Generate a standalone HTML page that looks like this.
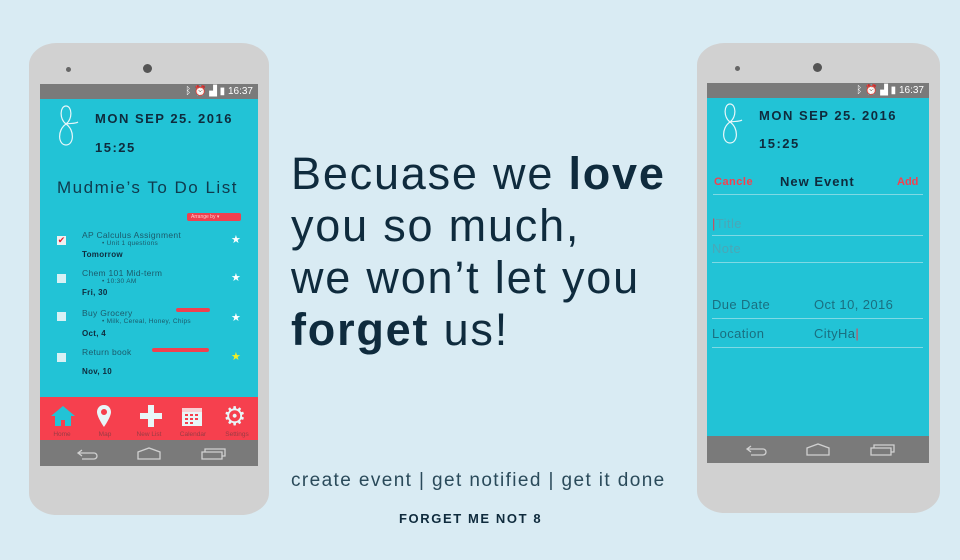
<!DOCTYPE html>
<html><head><meta charset="utf-8"><style>
*{margin:0;padding:0;box-sizing:border-box}
body{width:960px;height:560px;background:#d9ebf3;position:relative;overflow:hidden;font-family:"Liberation Sans",sans-serif;color:#0f2b3d}
.abs{position:absolute}
.phone{position:absolute;background:#d1d1d1;border-radius:28px/22px}
.status{position:absolute;background:#7a7a7a;color:#fff;font-size:10px;text-align:right;padding-right:5px;line-height:15px}
.teal{position:absolute;background:#22c3d6}
.nav{position:absolute;background:#7a7a7a}
.date{font-weight:bold;letter-spacing:1.5px;font-size:13px;color:#0f2b3d}
.cb{position:absolute;width:9px;height:9px;background:#d8f1f5;left:17px}
.it{position:absolute;left:42px;font-size:8.5px;color:#1b5a6b;letter-spacing:.3px}
.sub{position:absolute;left:62px;font-size:6.5px;color:#1b5a6b;letter-spacing:.3px}
.due{position:absolute;left:42px;font-size:8px;font-weight:bold;color:#0f2b3d;letter-spacing:.3px}
.star{position:absolute;left:191px;color:#fff;font-size:11px}
.tag{position:absolute;background:#f0404f;height:5px;border-radius:2px}
.nv{position:absolute;color:#9a3b44;font-size:6.5px;width:44px;text-align:center;top:34px}
.field{position:absolute;left:5px;right:6px;border-bottom:1px solid #7fd9e4;font-size:13px;color:#1a6f80;letter-spacing:.4px}
</style></head><body>

<!-- left phone -->
<div class="phone" style="left:29px;top:43px;width:240px;height:472px"></div>
<div class="abs" style="left:66px;top:67px;width:5px;height:5px;border-radius:50%;background:#666"></div>
<div class="abs" style="left:143px;top:64px;width:9px;height:9px;border-radius:50%;background:#555"></div>
<div class="status" style="left:40px;top:84px;width:218px;height:15px">ᛒ ⏰ ▟ ▮ 16:37</div>
<div class="teal" style="left:40px;top:99px;width:218px;height:298px">
  <svg class="abs" style="left:14px;top:4px" width="26" height="46" viewBox="0 0 26 46"><path d="M12 21 C5 16 6 3 12 3 C18 3 19 16 12 21 C3 27 4 42 12 42 C20 42 21 27 12 21 M12 21 C17 20 21 21 24 19" fill="none" stroke="#e8f7fa" stroke-width="1.2"/></svg>
  <div class="abs date" style="left:55px;top:12px">MON SEP 25. 2016</div>
  <div class="abs date" style="left:55px;top:41px">15:25</div>
  <div class="abs" style="left:17px;top:79px;font-size:17px;color:#0f3a4d;letter-spacing:1.5px">Mudmie’s To Do List</div>
  <div class="abs" style="left:147px;top:114px;width:54px;height:8px;background:#f0404f;border-radius:2px;font-size:5px;color:#fcc;padding-left:4px;line-height:8px">Arrange by ▾</div>
  <div class="cb" style="top:137px;background:#f0f0f0;color:#e02030;font-size:9px;line-height:9px;text-align:center">✔</div>
  <div class="it" style="top:131px">AP Calculus Assignment</div>
  <div class="sub" style="top:141px">• Unit 1 questions</div>
  <div class="due" style="top:151px">Tomorrow</div>
  <div class="star" style="top:134px">★</div>
  <div class="cb" style="top:175px"></div>
  <div class="it" style="top:169px">Chem 101 Mid-term</div>
  <div class="sub" style="top:179px">• 10:30 AM</div>
  <div class="due" style="top:189px">Fri, 30</div>
  <div class="star" style="top:172px">★</div>
  <div class="cb" style="top:213px"></div>
  <div class="it" style="top:209px">Buy Grocery</div>
  <div class="tag" style="left:136px;top:209px;width:34px;height:4px"></div>
  <div class="sub" style="top:219px">• Milk, Cereal, Honey, Chips</div>
  <div class="due" style="top:230px">Oct, 4</div>
  <div class="star" style="top:212px">★</div>
  <div class="cb" style="top:254px"></div>
  <div class="it" style="top:248px">Return book</div>
  <div class="tag" style="left:112px;top:249px;width:57px;height:4px"></div>
  <div class="due" style="top:268px">Nov, 10</div>
  <div class="star" style="top:251px;color:#f4f020">★</div>
</div>
<div class="abs" style="left:40px;top:397px;width:218px;height:43px;background:#f6404e">
  <svg class="abs" style="left:10px;top:8px" width="26" height="22" viewBox="0 0 26 22"><path d="M13 1 L1 11 H5 V21 H11 V15 H15 V21 H21 V11 H25 Z" fill="#22c3d6"/></svg>
  <svg class="abs" style="left:56px;top:7px" width="16" height="24" viewBox="0 0 16 24"><path d="M8 1 C3 1 1 5 1 8 C1 13 8 23 8 23 C8 23 15 13 15 8 C15 5 13 1 8 1Z M8 5 a3 3 0 1 0 .01 0Z" fill="#e8f6f8" fill-rule="evenodd"/></svg>
  <div class="abs" style="left:100px;top:16px;width:22px;height:6px;background:#e8f6f8"></div>
  <div class="abs" style="left:108px;top:8px;width:6px;height:22px;background:#e8f6f8"></div>
  <svg class="abs" style="left:141px;top:8px" width="22" height="22" viewBox="0 0 22 22"><rect x="1" y="3" width="20" height="18" fill="#e8f6f8"/><rect x="1" y="3" width="20" height="4" fill="#f8d0d4"/><g fill="#f6404e"><rect x="4" y="9" width="3" height="2"/><rect x="9" y="9" width="3" height="2"/><rect x="14" y="9" width="3" height="2"/><rect x="4" y="13" width="3" height="2"/><rect x="9" y="13" width="3" height="2"/><rect x="14" y="13" width="3" height="2"/><rect x="4" y="17" width="3" height="2"/><rect x="9" y="17" width="3" height="2"/></g></svg>
  <div class="abs" style="left:183px;top:6px;color:#e8f6f8;font-size:26px;line-height:26px">⚙</div>
  <div class="nv" style="left:0px">Home</div>
  <div class="nv" style="left:43px">Map</div>
  <div class="nv" style="left:87px">New List</div>
  <div class="nv" style="left:131px">Calendar</div>
  <div class="nv" style="left:175px">Settings</div>
</div>
<div class="nav" style="left:40px;top:440px;width:218px;height:26px">
  <svg class="abs" style="left:36px;top:7px" width="150" height="14" viewBox="0 0 150 14"><g fill="none" stroke="#d0d0d0" stroke-width="1.3"><path d="M6 3 L2 6 L6 9 M2 6 H18 A3 3 0 0 1 18 12 H6"/><path d="M62 5 L73 1 L84 5 V12 H62Z"/><path d="M126 5 H146 V12 H126Z M129 5 V2 H149 V9 H146"/></g></svg>
</div>

<!-- center text -->
<div class="abs" style="left:291px;top:148px;font-size:45px;line-height:52px;color:#0f2b3d;font-weight:400;letter-spacing:1.8px">Becuase we <b style="font-weight:700">love</b><br>you so much,<br>we won’t let you<br><b style="font-weight:700">forget</b> us!</div>
<div class="abs" style="left:291px;top:470px;font-size:19px;color:#2a4a5a;letter-spacing:1.4px">create event | get notified | get it done</div>
<div class="abs" style="left:399px;top:511px;font-size:13px;font-weight:bold;color:#0f2b3d;letter-spacing:1.6px">FORGET ME NOT 8</div>

<!-- right phone -->
<div class="phone" style="left:697px;top:43px;width:243px;height:470px"></div>
<div class="abs" style="left:735px;top:66px;width:5px;height:5px;border-radius:50%;background:#666"></div>
<div class="abs" style="left:813px;top:63px;width:9px;height:9px;border-radius:50%;background:#555"></div>
<div class="status" style="left:707px;top:83px;width:222px;height:15px">ᛒ ⏰ ▟ ▮ 16:37</div>
<div class="teal" style="left:707px;top:98px;width:222px;height:338px">
  <svg class="abs" style="left:11px;top:3px" width="26" height="46" viewBox="0 0 26 46"><path d="M12 21 C5 16 6 3 12 3 C18 3 19 16 12 21 C3 27 4 42 12 42 C20 42 21 27 12 21 M12 21 C17 20 21 21 24 19" fill="none" stroke="#e8f7fa" stroke-width="1.2"/></svg>
  <div class="abs date" style="left:52px;top:10px">MON SEP 25. 2016</div>
  <div class="abs date" style="left:52px;top:38px">15:25</div>
  <div class="abs" style="left:7px;top:78px;font-size:11px;font-weight:bold;color:#f6404e;letter-spacing:.5px">Cancle</div>
  <div class="abs" style="left:73px;top:76px;font-size:13px;font-weight:bold;color:#0f2b3d;letter-spacing:1px">New Event</div>
  <div class="abs" style="left:190px;top:78px;font-size:11px;font-weight:bold;color:#f6404e">Add</div>
  <div class="abs" style="left:6px;right:6px;top:96px;border-top:1px solid #7fd9e4"></div>
  <div class="field" style="top:118px;height:20px;color:#4aa7b7"><span style="color:#e04050">|</span>Title</div>
  <div class="field" style="top:143px;height:22px;color:#4aa7b7">Note</div>
  <div class="field" style="top:199px;height:22px">Due Date<span class="abs" style="left:102px">Oct 10, 2016</span></div>
  <div class="field" style="top:228px;height:22px">Location<span class="abs" style="left:102px">CityHa<span style="color:#e04050">|</span></span></div>
</div>
<div class="nav" style="left:707px;top:436px;width:222px;height:27px">
  <svg class="abs" style="left:38px;top:7px" width="150" height="14" viewBox="0 0 150 14"><g fill="none" stroke="#d0d0d0" stroke-width="1.3"><path d="M6 3 L2 6 L6 9 M2 6 H18 A3 3 0 0 1 18 12 H6"/><path d="M62 5 L73 1 L84 5 V12 H62Z"/><path d="M126 5 H146 V12 H126Z M129 5 V2 H149 V9 H146"/></g></svg>
</div>
</body></html>
